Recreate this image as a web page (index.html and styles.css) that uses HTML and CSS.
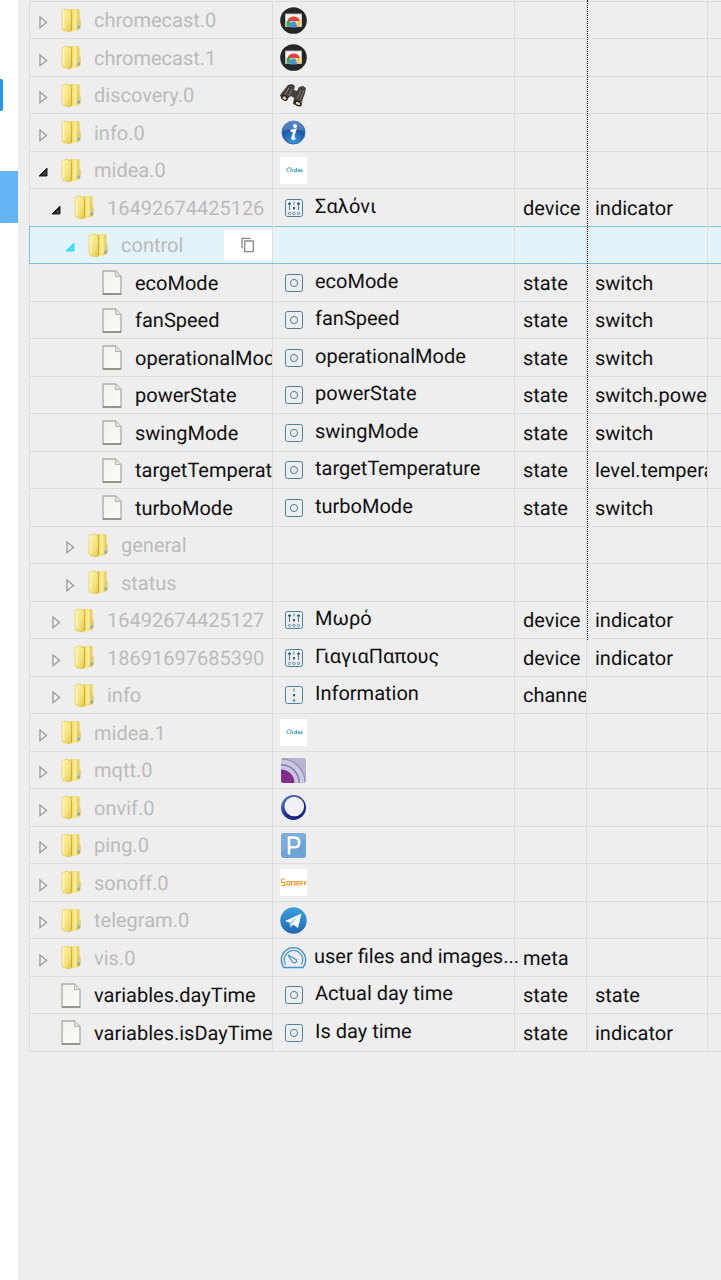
FILE: index.html
```
<!DOCTYPE html>
<html lang="en">
<head>
    <meta charset="UTF-8">
    <meta name="viewport" content="width=device-width, initial-scale=1.0">
    <title>Objects</title>
    <link rel="stylesheet" href="styles.css">
</head>
<body>
    <!-- shared icons -->
    <svg class="sprite" aria-hidden="true">
        <defs>
            <linearGradient id="gFolder" x1="0" x2="1" y1="0" y2="1">
                <stop offset="0" stop-color="#fdf6a4"/>
                <stop offset="0.6" stop-color="#f3e27c"/>
                <stop offset="1" stop-color="#e2c246"/>
            </linearGradient>
            <linearGradient id="gBack" x1="0" x2="1" y1="0" y2="0">
                <stop offset="0" stop-color="#cfa92c"/>
                <stop offset="0.4" stop-color="#f8ea88"/>
                <stop offset="1" stop-color="#e4c64e"/>
            </linearGradient>
            <linearGradient id="gPage" x1="0" x2="1" y1="0" y2="1">
                <stop offset="0" stop-color="#f0f1ec"/>
                <stop offset="1" stop-color="#fcfdfa"/>
            </linearGradient>
            <radialGradient id="gInfo" cx="0.5" cy="0.9" r="0.9">
                <stop offset="0" stop-color="#3b9be0"/>
                <stop offset="0.6" stop-color="#1d56a8"/>
                <stop offset="1" stop-color="#2a62b4"/>
            </radialGradient>
            <linearGradient id="gOnvif" x1="0" x2="1" y1="0" y2="1">
                <stop offset="0" stop-color="#5b8fd0"/>
                <stop offset="0.5" stop-color="#1c2f90"/>
                <stop offset="1" stop-color="#141b78"/>
            </linearGradient>
            <linearGradient id="gTelegram" x1="0" x2="0" y1="0" y2="1">
                <stop offset="0" stop-color="#38a0dc"/>
                <stop offset="1" stop-color="#2168b4"/>
            </linearGradient>
            <linearGradient id="gMqtt" x1="0" x2="1" y1="0" y2="1">
                <stop offset="0" stop-color="#6c3390"/>
                <stop offset="1" stop-color="#962a86"/>
            </linearGradient>
            <clipPath id="cMqtt"><rect x="1" y="1" width="25" height="25" rx="3"/></clipPath>
        </defs>
        <symbol id="closed" viewBox="0 0 10 14">
            <path d="M2 2 8.500 7.500 2 12.500z" fill="#f4f4f4" stroke="#a2a2a2" stroke-width="1.500"/>
        </symbol>
        <symbol id="opened" viewBox="0 0 10 14">
            <path d="M9 3v8H1z" fill="currentColor" stroke="currentColor" stroke-linejoin="round"/>
            <path d="M7.500 6.500v3H4.500z" fill="#fff" opacity="0.25"/>
        </symbol>
        <symbol id="folder" viewBox="0 0 20 25">
            <path d="M8 3 10 1h7l1.500 1v9l1 1v8l-2 2-8 1.500z" fill="url(#gBack)"/>
            <path d="M14.500 2v18" stroke="#fff9c0" stroke-width="1.500" opacity="0.6"/>
            <path d="M16.500 13h3v6l-3 2z" fill="#d5cf80"/>
            <path d="M16.500 17.500h2.500v2.500l-2.500 1z" fill="#8fadb0"/>
            <path d="M1 2.500 5 1h2v1l3.500 1.500v19L8.500 24 2 22.500 1 20z" fill="url(#gFolder)" stroke="#d8b83c" stroke-width="0.500"/>
            <path d="M2.500 3v17" stroke="#fffcd0" stroke-width="1.500" opacity="0.7"/>
            <path d="M10.500 4v18" stroke="#c49c22" stroke-width="0.800" opacity="0.7"/>
        </symbol>
        <symbol id="page" viewBox="0 0 20 25">
            <path d="M1 1h12.500L19 6.500V24H1z" fill="url(#gPage)" stroke="#adb0a8" stroke-width="1.400"/>
            <path d="M13.500 1v5.500H19" fill="#dfe1da" stroke="#b4b7ae"/>
            <path d="M1 24h18" stroke="#85897f" stroke-width="1.500"/>
        </symbol>
        <symbol id="chromecast" viewBox="0 0 27 27">
            <circle cx="13.500" cy="13.500" r="13.300" fill="#262626"/>
            <path d="M5.500 7h16v12.500h-16z" fill="#f7f7f7" stroke="#bdbdbd"/>
            <path d="M7.500 14.500a6.200 5 0 0 1 12.400 0z" fill="#df4437"/>
            <path d="M6.500 14h5.500v5.500H6.500z" fill="#3aa757"/>
            <path d="M20.500 14H15v5.500h5.500z" fill="#f6c844"/>
            <path d="M10.500 14h6v2h-6z" fill="#fff"/>
            <path d="M11.200 14.500h4.600v3h1v3h-6.600v-3h1z" fill="#4a8be8"/>
        </symbol>
        <symbol id="discovery" viewBox="0 0 27 27">
            <path d="M8 3 12 2l3 2-1 4 3 1 2-4 4-1 3 2-1 5-4 11-3 2-5-2 1-6-3-2-5 4-4-1-2-4z" fill="#45403b"/>
            <path d="M9 6 5 13M21 8l-4 9M12 7l-3 7M24 8l-4 10" stroke="#88827b"/>
            <ellipse cx="4.500" cy="16" rx="3.500" ry="2.500" transform="rotate(35 4.500 16)" fill="#16120f"/>
            <ellipse cx="4.500" cy="16" rx="2.200" ry="1.500" transform="rotate(35 4.500 16)" fill="#dccb98"/>
            <ellipse cx="18" cy="21.500" rx="4" ry="2.500" transform="rotate(25 18 21.500)" fill="#16120f"/>
            <ellipse cx="18" cy="21.500" rx="2.600" ry="1.500" transform="rotate(25 18 21.500)" fill="#e3d3a2"/>
        </symbol>
        <symbol id="infoBall" viewBox="0 0 27 27">
            <circle cx="13.500" cy="13.500" r="11.500" fill="url(#gInfo)" stroke="#3e6cae"/>
            <path d="M3 12a10.500 10.500 0 0 1 21 0q-10-4-21 0z" fill="#fff" opacity="0.2"/>
            <circle cx="15" cy="7" r="2" fill="#fff"/>
            <path d="M10.500 12 15 11l-2.500 8q-.3 1.500 2.700-.3" fill="none" stroke="#fff" stroke-width="2.600"/>
        </symbol>
        <symbol id="midea" viewBox="0 0 27 27">
            <path d="M0 0h27v27H0z" fill="#fff"/>
            <path d="M8.500 14.500q-3-.5-1.500-2.500t4-1q1 1.500-.8 4M12.500 12.500v2.300M14 13.500q0-1.200 1.200-1t1.200 1.200-1.200 1.100-1.200-1.300M16.500 11v3.800M18 13.700h2q0-1.300-1-1.200t-1 1.200 1 1.100h.8M22 12.500v2.300q-1.500 0-1.400-1.100t1.400-1.200" fill="none" stroke="#2394c4" stroke-width="0.800"/>
        </symbol>
        <symbol id="mqtt" viewBox="0 0 27 27">
            <g clip-path="url(#cMqtt)">
                <path d="M0 0h27v27H0z" fill="#b9b4d2"/>
                <circle cx="1" cy="26" r="25" fill="#9c94c0"/>
                <circle cx="1" cy="26" r="23.500" fill="#cbc8e0"/>
                <circle cx="1" cy="26" r="19" fill="#8178ae"/>
                <circle cx="1" cy="26" r="17.500" fill="#c9c6de"/>
                <circle cx="1" cy="26" r="13.500" fill="url(#gMqtt)"/>
            </g>
        </symbol>
        <symbol id="onvif" viewBox="0 0 27 27">
            <circle cx="13.500" cy="13.500" r="12.500" fill="url(#gOnvif)"/>
            <circle cx="14.300" cy="12.500" r="9.800" fill="#f1f1f5"/>
        </symbol>
        <symbol id="ping" viewBox="0 0 27 27">
            <rect x="1" y="1" width="25" height="25" rx="3" fill="#6ea3d6"/>
            <path d="M1 20 26 7V4q0-3-3-3H4Q1 1 1 4z" fill="#fff" opacity="0.1"/>
            <path d="M9 22.500V5.500h5q5.200 0 5.200 4.900t-5.200 4.900H9" fill="none" stroke="#fff" stroke-width="2.600"/>
        </symbol>
        <symbol id="sonoff" viewBox="0 0 27 27">
            <path d="M0 0h27v27H0z" fill="#fff"/>
            <path d="M5.500 10H1.500v3.300h3.300v3H1M7 12.500h2.800v3.300H7zM11.500 16.500v-4h2.800v4M16 16.500v-4h3v4M16 14.800h3M21 16.500v-4h2.200M21 14.500h2M24.500 16.500v-4h2M24.500 14.500h2" fill="none" stroke="#e8a33a" stroke-width="1.200"/>
        </symbol>
        <symbol id="telegram" viewBox="0 0 27 27">
            <circle cx="13.500" cy="13.500" r="13.200" fill="url(#gTelegram)"/>
            <path d="M5 14 21.500 6.500 18 21l-5-3.500-2.500 3-1-5z" fill="#fff"/>
            <path d="M9.500 15.500 18 9.500l-6.500 7.500-1 3.500z" fill="#a9c9e4"/>
        </symbol>
        <symbol id="vis" viewBox="0 0 27 27">
            <g fill="none" stroke="#4795cb" stroke-width="1.300">
                <path d="M4 23.500a12.200 12.200 0 1 1 19 0z"/>
                <path d="M5.500 20.500a9.300 9.300 0 1 1 16 0"/>
                <path d="m8 11 8 4.500q1.500 2-.5 3t-3-.5z"/>
            </g>
        </symbol>
        <symbol id="device" viewBox="0 0 18 18">
            <g fill="none" stroke="#4a82a0">
                <rect x="0.500" y="0.500" width="17" height="17" rx="2"/>
                <path d="M4.500 3v8M9 2.500v3M9 8v3M13.500 3v8"/>
            </g>
            <g fill="none" stroke="#4a82a0" stroke-width="0.800">
                <circle cx="4.500" cy="14.500" r="1.200"/>
                <circle cx="9" cy="14.500" r="1.200"/>
                <circle cx="13.500" cy="14.500" r="1.200"/>
            </g>
            <path d="M3 4h3v1.500H3zM8 8h2v2H8zM12 4h3v1.500h-3z" fill="#2a617f"/>
        </symbol>
        <symbol id="channel" viewBox="0 0 18 18">
            <g fill="none" stroke="#4a82a0">
                <rect x="0.500" y="0.500" width="17" height="17" rx="2"/>
                <path d="M9 2.500v3M9 8v3"/>
                <circle cx="9" cy="14.500" r="1"/>
            </g>
            <path d="M8 8h2v2H8z" fill="#2a617f"/>
        </symbol>
        <symbol id="state" viewBox="0 0 18 18">
            <g fill="none" stroke="#4a82a0">
                <rect x="0.500" y="0.500" width="17" height="17" rx="2"/>
                <circle cx="9" cy="9" r="3.600"/>
            </g>
        </symbol>
        <symbol id="copy" viewBox="0 0 24 24">
            <path d="M16 1H4a2 2 0 0 0-2 2v14h2V3h12zm3 4H8a2 2 0 0 0-2 2v14c0 1.100.9 2 2 2h11a2 2 0 0 0 2-2V7a2 2 0 0 0-2-2zm0 16H8V7h11z" fill="#888"/>
        </symbol>
    </svg>

    <div class="app">
        <nav class="sidebar">
            <div class="menu_mark"></div>
            <div class="menu_active"></div>
        </nav>
        <main class="content">
            <div class="resize_line"></div>
            <table class="tree">
                <colgroup>
                    <col class="col_id">
                    <col class="col_name">
                    <col class="col_type">
                    <col class="col_role">
                    <col class="col_rest">
                </colgroup>
                <tbody>
                    <tr>
                        <td><div class="node"><button class="toggle" aria-label="expand"><svg><use href="#closed"/></svg></button><svg class="kind"><use href="#folder"/></svg><span>chromecast.0</span></div></td>
                        <td><div class="label"><svg class="logo"><use href="#chromecast"/></svg></div></td>
                        <td></td><td></td><td></td>
                    </tr>
                    <tr>
                        <td><div class="node"><button class="toggle" aria-label="expand"><svg><use href="#closed"/></svg></button><svg class="kind"><use href="#folder"/></svg><span>chromecast.1</span></div></td>
                        <td><div class="label"><svg class="logo"><use href="#chromecast"/></svg></div></td>
                        <td></td><td></td><td></td>
                    </tr>
                    <tr>
                        <td><div class="node"><button class="toggle" aria-label="expand"><svg><use href="#closed"/></svg></button><svg class="kind"><use href="#folder"/></svg><span>discovery.0</span></div></td>
                        <td><div class="label"><svg class="logo"><use href="#discovery"/></svg></div></td>
                        <td></td><td></td><td></td>
                    </tr>
                    <tr>
                        <td><div class="node"><button class="toggle" aria-label="expand"><svg><use href="#closed"/></svg></button><svg class="kind"><use href="#folder"/></svg><span>info.0</span></div></td>
                        <td><div class="label"><svg class="logo"><use href="#infoBall"/></svg></div></td>
                        <td></td><td></td><td></td>
                    </tr>
                    <tr>
                        <td><div class="node"><button class="toggle" aria-label="collapse"><svg><use href="#opened"/></svg></button><svg class="kind"><use href="#folder"/></svg><span>midea.0</span></div></td>
                        <td><div class="label"><svg class="logo"><use href="#midea"/></svg></div></td>
                        <td></td><td></td><td></td>
                    </tr>
                    <tr>
                        <td><div class="node level2"><button class="toggle" aria-label="collapse"><svg><use href="#opened"/></svg></button><svg class="kind"><use href="#folder"/></svg><span>16492674425126</span></div></td>
                        <td><div class="label"><svg class="mini"><use href="#device"/></svg><span>Σαλόνι</span></div></td>
                        <td>device</td><td>indicator</td><td></td>
                    </tr>
                    <tr class="selected">
                        <td><div class="node level3"><button class="toggle" aria-label="collapse"><svg><use href="#opened"/></svg></button><svg class="kind"><use href="#folder"/></svg><span>control</span><button class="copy" aria-label="copy"><svg><use href="#copy"/></svg></button></div></td>
                        <td></td>
                        <td></td><td></td><td></td>
                    </tr>
                    <tr>
                        <td><div class="node leaf level4"><svg class="kind"><use href="#page"/></svg><span>ecoMode</span></div></td>
                        <td><div class="label"><svg class="mini"><use href="#state"/></svg><span>ecoMode</span></div></td>
                        <td>state</td><td>switch</td><td></td>
                    </tr>
                    <tr>
                        <td><div class="node leaf level4"><svg class="kind"><use href="#page"/></svg><span>fanSpeed</span></div></td>
                        <td><div class="label"><svg class="mini"><use href="#state"/></svg><span>fanSpeed</span></div></td>
                        <td>state</td><td>switch</td><td></td>
                    </tr>
                    <tr>
                        <td><div class="node leaf level4"><svg class="kind"><use href="#page"/></svg><span>operationalMode</span></div></td>
                        <td><div class="label"><svg class="mini"><use href="#state"/></svg><span>operationalMode</span></div></td>
                        <td>state</td><td>switch</td><td></td>
                    </tr>
                    <tr>
                        <td><div class="node leaf level4"><svg class="kind"><use href="#page"/></svg><span>powerState</span></div></td>
                        <td><div class="label"><svg class="mini"><use href="#state"/></svg><span>powerState</span></div></td>
                        <td>state</td><td>switch.power</td><td></td>
                    </tr>
                    <tr>
                        <td><div class="node leaf level4"><svg class="kind"><use href="#page"/></svg><span>swingMode</span></div></td>
                        <td><div class="label"><svg class="mini"><use href="#state"/></svg><span>swingMode</span></div></td>
                        <td>state</td><td>switch</td><td></td>
                    </tr>
                    <tr>
                        <td><div class="node leaf level4"><svg class="kind"><use href="#page"/></svg><span>targetTemperature</span></div></td>
                        <td><div class="label"><svg class="mini"><use href="#state"/></svg><span>targetTemperature</span></div></td>
                        <td>state</td><td>level.temperature</td><td></td>
                    </tr>
                    <tr>
                        <td><div class="node leaf level4"><svg class="kind"><use href="#page"/></svg><span>turboMode</span></div></td>
                        <td><div class="label"><svg class="mini"><use href="#state"/></svg><span>turboMode</span></div></td>
                        <td>state</td><td>switch</td><td></td>
                    </tr>
                    <tr>
                        <td><div class="node level3"><button class="toggle" aria-label="expand"><svg><use href="#closed"/></svg></button><svg class="kind"><use href="#folder"/></svg><span>general</span></div></td>
                        <td></td>
                        <td></td><td></td><td></td>
                    </tr>
                    <tr>
                        <td><div class="node level3"><button class="toggle" aria-label="expand"><svg><use href="#closed"/></svg></button><svg class="kind"><use href="#folder"/></svg><span>status</span></div></td>
                        <td></td>
                        <td></td><td></td><td></td>
                    </tr>
                    <tr>
                        <td><div class="node level2"><button class="toggle" aria-label="expand"><svg><use href="#closed"/></svg></button><svg class="kind"><use href="#folder"/></svg><span>16492674425127</span></div></td>
                        <td><div class="label"><svg class="mini"><use href="#device"/></svg><span>Μωρό</span></div></td>
                        <td>device</td><td>indicator</td><td></td>
                    </tr>
                    <tr>
                        <td><div class="node level2"><button class="toggle" aria-label="expand"><svg><use href="#closed"/></svg></button><svg class="kind"><use href="#folder"/></svg><span>18691697685390</span></div></td>
                        <td><div class="label"><svg class="mini"><use href="#device"/></svg><span>ΓιαγιαΠαπους</span></div></td>
                        <td>device</td><td>indicator</td><td></td>
                    </tr>
                    <tr>
                        <td><div class="node level2"><button class="toggle" aria-label="expand"><svg><use href="#closed"/></svg></button><svg class="kind"><use href="#folder"/></svg><span>info</span></div></td>
                        <td><div class="label"><svg class="mini"><use href="#channel"/></svg><span>Information</span></div></td>
                        <td>channel</td><td></td><td></td>
                    </tr>
                    <tr>
                        <td><div class="node"><button class="toggle" aria-label="expand"><svg><use href="#closed"/></svg></button><svg class="kind"><use href="#folder"/></svg><span>midea.1</span></div></td>
                        <td><div class="label"><svg class="logo"><use href="#midea"/></svg></div></td>
                        <td></td><td></td><td></td>
                    </tr>
                    <tr>
                        <td><div class="node"><button class="toggle" aria-label="expand"><svg><use href="#closed"/></svg></button><svg class="kind"><use href="#folder"/></svg><span>mqtt.0</span></div></td>
                        <td><div class="label"><svg class="logo"><use href="#mqtt"/></svg></div></td>
                        <td></td><td></td><td></td>
                    </tr>
                    <tr>
                        <td><div class="node"><button class="toggle" aria-label="expand"><svg><use href="#closed"/></svg></button><svg class="kind"><use href="#folder"/></svg><span>onvif.0</span></div></td>
                        <td><div class="label"><svg class="logo"><use href="#onvif"/></svg></div></td>
                        <td></td><td></td><td></td>
                    </tr>
                    <tr>
                        <td><div class="node"><button class="toggle" aria-label="expand"><svg><use href="#closed"/></svg></button><svg class="kind"><use href="#folder"/></svg><span>ping.0</span></div></td>
                        <td><div class="label"><svg class="logo"><use href="#ping"/></svg></div></td>
                        <td></td><td></td><td></td>
                    </tr>
                    <tr>
                        <td><div class="node"><button class="toggle" aria-label="expand"><svg><use href="#closed"/></svg></button><svg class="kind"><use href="#folder"/></svg><span>sonoff.0</span></div></td>
                        <td><div class="label"><svg class="logo"><use href="#sonoff"/></svg></div></td>
                        <td></td><td></td><td></td>
                    </tr>
                    <tr>
                        <td><div class="node"><button class="toggle" aria-label="expand"><svg><use href="#closed"/></svg></button><svg class="kind"><use href="#folder"/></svg><span>telegram.0</span></div></td>
                        <td><div class="label"><svg class="logo"><use href="#telegram"/></svg></div></td>
                        <td></td><td></td><td></td>
                    </tr>
                    <tr>
                        <td><div class="node"><button class="toggle" aria-label="expand"><svg><use href="#closed"/></svg></button><svg class="kind"><use href="#folder"/></svg><span>vis.0</span></div></td>
                        <td><div class="label"><svg class="logo"><use href="#vis"/></svg><span>user files and images...</span></div></td>
                        <td>meta</td><td></td><td></td>
                    </tr>
                    <tr>
                        <td><div class="node leaf"><svg class="kind"><use href="#page"/></svg><span>variables.dayTime</span></div></td>
                        <td><div class="label"><svg class="mini"><use href="#state"/></svg><span>Actual day time</span></div></td>
                        <td>state</td><td>state</td><td></td>
                    </tr>
                    <tr>
                        <td><div class="node leaf"><svg class="kind"><use href="#page"/></svg><span>variables.isDayTime</span></div></td>
                        <td><div class="label"><svg class="mini"><use href="#state"/></svg><span>Is day time</span></div></td>
                        <td>state</td><td>indicator</td><td></td>
                    </tr>
                </tbody>
            </table>
        </main>
    </div>
</body>
</html>
```
FILE: styles.css
```
* {
    margin: 0;
    padding: 0;
    box-sizing: border-box;
}
body {
    font-family: Roboto, "Noto Sans", sans-serif;
    font-size: 20px;
    line-height: 24px;
    text-rendering: geometricPrecision;
    color: #111;
    background-color: #eee;
}
button {
    border: none;
    background: none;
    cursor: pointer;
}
.sprite {
    position: absolute;
    width: 0;
    height: 0;
}
.app {
    display: flex;
    min-height: 100vh;
}

/* left menu, only its edge is visible */
.sidebar {
    flex: none;
    width: 18px;
    padding-top: 79px;
    background-color: #fff;
}
.menu_mark {
    width: 3px;
    height: 32px;
    border-radius: 0 2px 2px 0;
    background-color: #2196f3;
}
.menu_active {
    height: 52px;
    margin-top: 60px;
    background-color: #64b5f6;
}

.content {
    position: relative;
    flex: 1;
    min-width: 0;
    padding: 1px 0 0 11px;
    overflow: hidden;
}
.resize_line {
    position: absolute;
    top: 0;
    left: 569px;
    height: 640px;
    border-left: 1px dotted #111;
}

/* object tree */
.tree {
    width: 100%;
    table-layout: fixed;
    border-collapse: collapse;
    border: 1px solid #ddd;
    border-right: none;
}
.col_id {
    width: 243px;
}
.col_name {
    width: 242px;
}
.col_type {
    width: 72px;
}
.col_role {
    width: 121px;
}
.tree tr {
    height: 37px;
    border-bottom: 1px solid #ddd;
}
.tree tr:nth-child(even) {
    height: 38px;
}
.tree td {
    padding-left: 8px;
    border-right: 1px solid #ddd;
    overflow: hidden;
    white-space: nowrap;
}
.tree td:first-child,
.tree td:nth-child(2) {
    padding: 0;
}
.tree td:nth-child(2) {
    overflow: visible;
}
.tree td:last-child {
    border-right: none;
}
.tree .selected {
    background-color: #e2f3fa;
}
.tree .selected td {
    border-top: 1px solid #8cc4de;
    border-bottom: 1px solid #7fbfde;
}
.tree .selected td:first-child {
    border-left: 1px solid #7fbfde;
}

.node {
    display: flex;
    align-items: center;
    height: 36px;
    padding-left: 8px;
    color: #bbb;
}
.leaf {
    padding-left: 31px;
    color: #111;
}
.level2 {
    padding-left: 21px;
}
.level3 {
    padding-left: 35px;
}
.level4 {
    padding-left: 72px;
}
.toggle {
    flex: none;
    width: 10px;
    height: 14px;
    margin: 4px 13px 0 0;
    color: #222;
}
.toggle svg {
    display: block;
    width: 10px;
    height: 14px;
}
.selected .toggle {
    color: #35dcf5;
}
.kind {
    flex: none;
    width: 20px;
    height: 25px;
    margin-right: 13px;
}
.copy {
    flex: none;
    width: 48px;
    height: 30px;
    margin-left: auto;
    background-color: #fff;
}
.copy svg {
    display: block;
    width: 16px;
    height: 16px;
    margin: 0 auto;
}

.label {
    display: flex;
    align-items: center;
    height: 36px;
    padding: 0 0 4px 7px;
}
.logo {
    flex: none;
    width: 27px;
    height: 27px;
    margin: 4px 7px 0 0;
}
.mini {
    flex: none;
    width: 18px;
    height: 18px;
    margin: 4px 12px 0 5px;
}
```
